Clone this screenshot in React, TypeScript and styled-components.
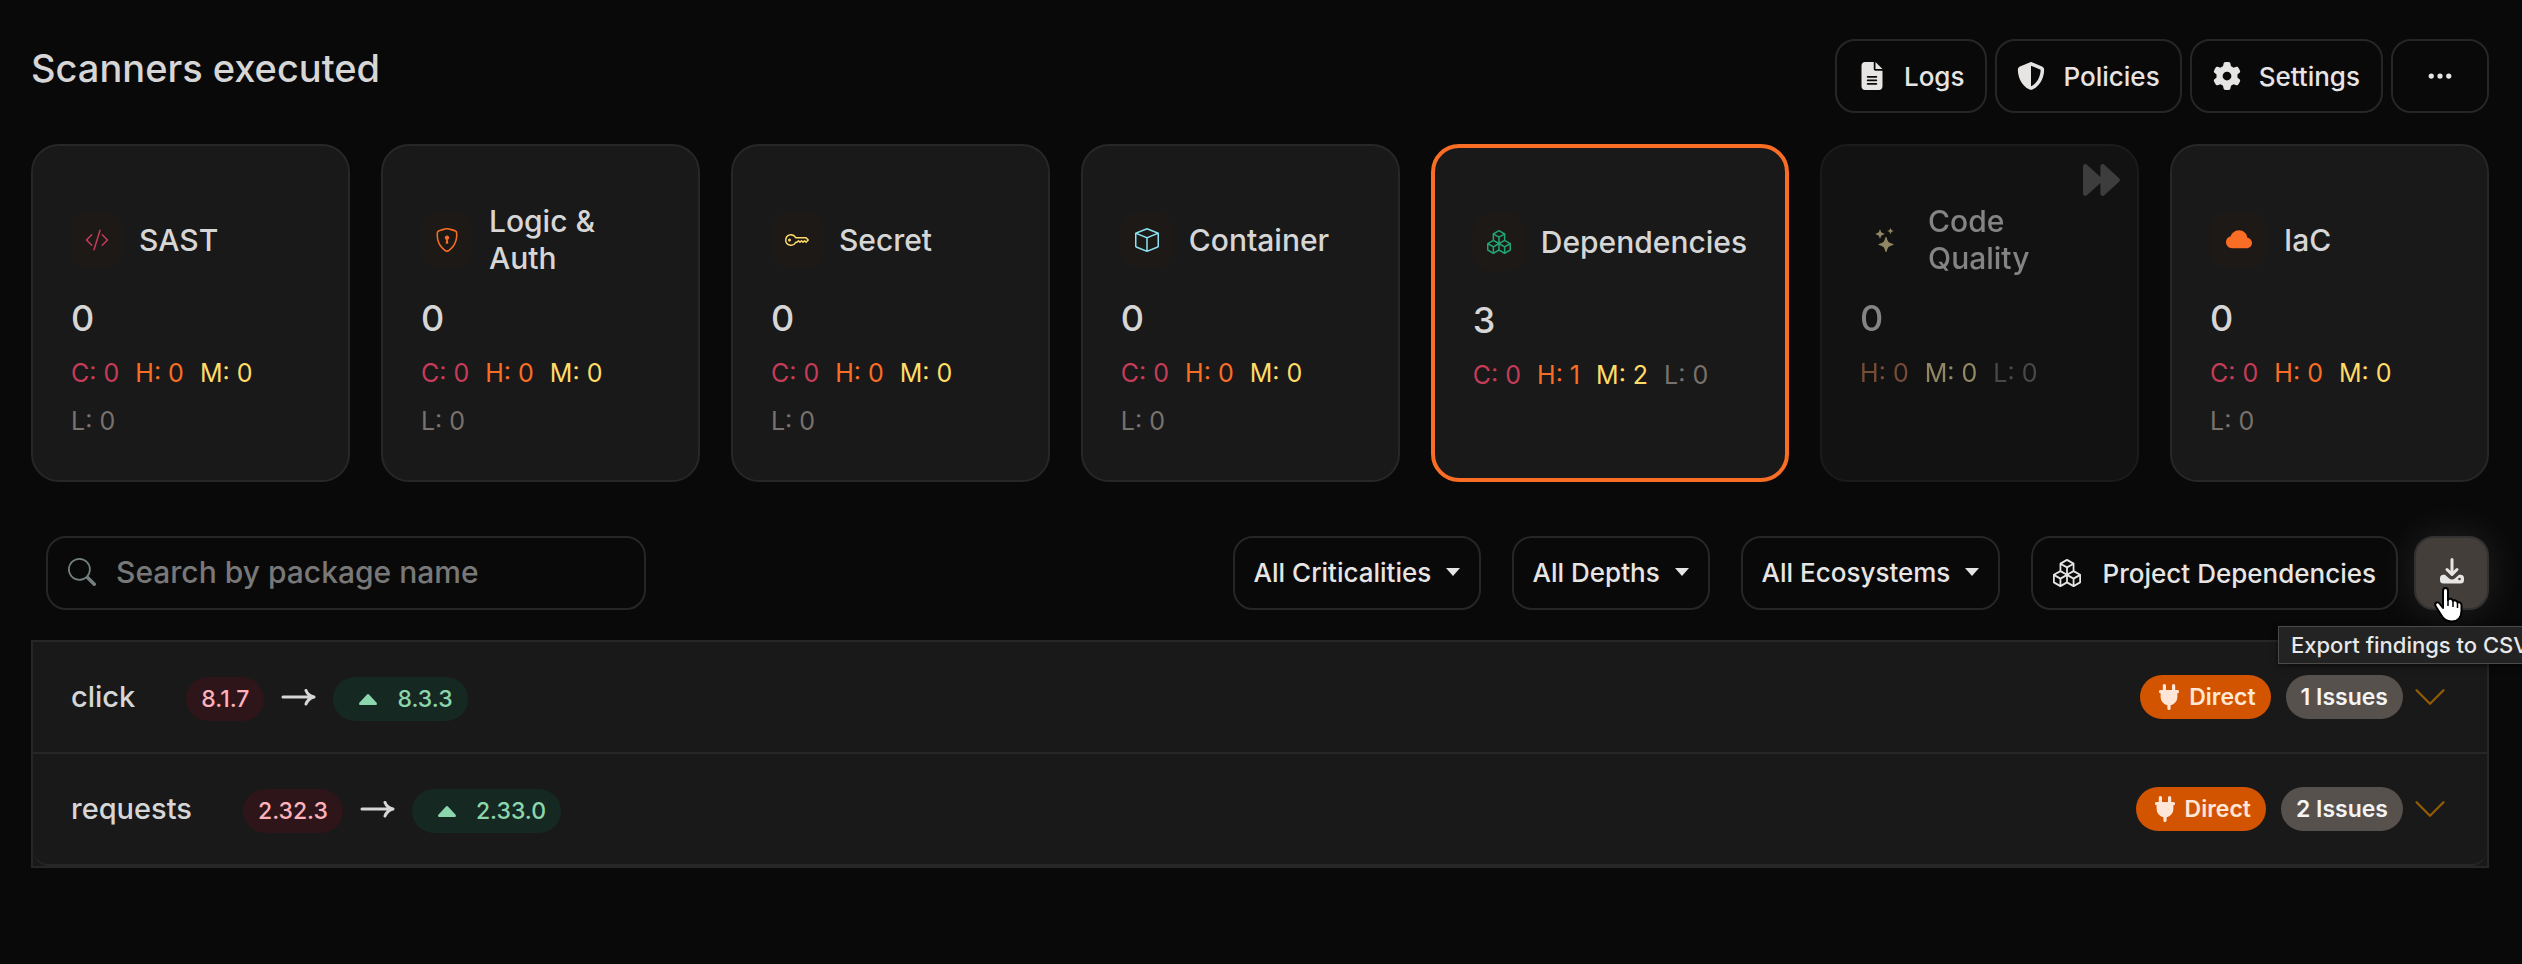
import React from "react";
import styled, { createGlobalStyle, css } from "styled-components";
import {
  BsCodeSlash, BsShieldLock, BsKey, BsBox, BsBoxes, BsStars, BsCloudFill,
  BsSearch, BsThreeDots, BsChevronDown,
} from "react-icons/bs";
import { FaFileLines, FaShieldHalved, FaGear } from "react-icons/fa6";

const Global = createGlobalStyle`
  * { box-sizing: border-box; }
  html, body { margin: 0; background: #090909; }
  html { min-height: 100%; }
  body {
    font-family: Inter, "Liberation Sans", sans-serif;
    color: #d6d6d6;
    overflow-x: hidden;
  }
  h1, h2, p, ul { margin: 0; padding: 0; }
  button, input, select { font: inherit; color: inherit; margin: 0; }
  svg { display: block; flex: none; }
`;

const Page = styled.main`
  padding: 39px 33px 48px 31px;
`;

const Header = styled.header`
  display: flex;
  justify-content: space-between;
  align-items: flex-start;
  margin-bottom: 31px;
`;

const Title = styled.h1`
  font-size: 38px;
  line-height: 58px;
  font-weight: 500;
`;

const Actions = styled.div`
  display: flex;
  gap: 8px;
`;

const outlined = css`
  height: 74px;
  border: 2px solid #262626;
  border-radius: 20px;
  background: #090909;
  color: #e7e5e4;
  font-size: 26px;
  font-weight: 500;
`;

const OutlineButton = styled.button<{ $gap?: number; $pad?: number }>`
  ${outlined}
  display: flex;
  align-items: center;
  justify-content: center;
  gap: ${(p) => p.$gap ?? 18}px;
  padding: 0 ${(p) => p.$pad ?? 20}px;
  cursor: pointer;
`;

const Cards = styled.section`
  display: flex;
  gap: 31px;
`;

const Card = styled.article<{ $active?: boolean; $muted?: boolean }>`
  position: relative;
  flex: 1 1 0;
  min-height: 338px;
  padding: 57px 38px 32px;
  border: ${(p) => (p.$active ? "4px solid #f96d25" : "2px solid #272727")};
  border-radius: 28px;
  background: #191919;
  ${(p) => p.$muted && "opacity: 0.6; filter: grayscale(0.5);"}
`;

const CardHead = styled.div`
  display: flex;
  align-items: center;
  gap: 16px;
  height: 74px;
`;

const IconTile = styled.span<{ $color: string; $wide?: boolean }>`
  display: flex;
  flex: none;
  align-items: center;
  justify-content: center;
  width: ${(p) => (p.$wide ? 58 : 52)}px;
  height: 58px;
  border-radius: 18px;
  background: #1d1917;
  color: ${(p) => p.$color};
  font-size: ${(p) => (p.$wide ? 26 : 24)}px;
`;

const CardName = styled.h2`
  font-size: 30px;
  line-height: 37px;
  font-weight: 500;
`;

const Count = styled.p`
  margin-top: 19px;
  font-size: 36px;
  line-height: 44px;
  font-weight: 500;
`;

const Levels = styled.ul`
  display: flex;
  flex-wrap: wrap;
  column-gap: 16px;
  margin-top: 9px;
  list-style: none;
  font-size: 25px;
  line-height: 48px;
`;

const levelColors = { C: "#c43c58", H: "#f96d25", M: "#ffdb67", L: "#78716c" };
type Level = keyof typeof levelColors;

const LevelItem = styled.li<{ $level: Level }>`
  color: ${(p) => levelColors[p.$level]};
`;

const Skipped = styled.span`
  position: absolute;
  top: 18px;
  right: 17px;
  color: #606060;
`;

const Toolbar = styled.section`
  display: flex;
  align-items: center;
  justify-content: space-between;
  margin: 54px 0 30px;
  padding-left: 15px;
`;

const SearchBox = styled.label`
  ${outlined}
  display: flex;
  align-items: center;
  gap: 20px;
  width: 600px;
  padding: 0 20px 2px;
  color: #748080;
  font-size: 30px;
  font-weight: 500;
`;

const SearchInput = styled.input`
  flex: 1;
  min-width: 0;
  padding: 0;
  border: 0;
  outline: 0;
  background: transparent;
  &::placeholder { color: #787878; opacity: 1; }
`;

const Filters = styled.div`
  display: flex;
  gap: 31px;
`;

const Filter = styled.label`
  ${outlined}
  display: flex;
  align-items: center;
  gap: 14px;
  padding: 0 19px 2px;
`;

const Select = styled.select`
  appearance: none;
  padding: 0;
  border: 0;
  outline: 0;
  background: transparent;
`;

const Exports = styled.div`
  display: flex;
  gap: 16px;
`;

const ExportWrap = styled.div`
  position: relative;
`;

const ExportButton = styled.button`
  ${outlined}
  display: flex;
  align-items: center;
  justify-content: center;
  width: 75px;
  padding: 0 0 4px;
  border-color: #333131;
  background: #443e3b;
  box-shadow: 0 0 40px rgba(231, 229, 228, 0.12);
  cursor: pointer;
`;

const Pointer = styled.svg`
  position: absolute;
  top: 50px;
  left: 19px;
  z-index: 3;
`;

const Tooltip = styled.div`
  position: absolute;
  top: 90px;
  left: -136px;
  z-index: 2;
  padding: 0 12px;
  border: 1px solid #4a4a4a;
  background: #232323;
  color: #e8e8e8;
  font-size: 22px;
  line-height: 36px;
  font-weight: 500;
  white-space: nowrap;
  box-shadow: 0 2px 6px rgba(0, 0, 0, 0.5);
`;

const Packages = styled.ul`
  list-style: none;
  border: 2px solid #262626;
  background: #191919;
`;

const PackageRow = styled.li`
  display: flex;
  align-items: center;
  height: 112px;
  padding: 0 39px 0 38px;
  border-bottom: 2px solid #262626;
  &:last-child { border-radius: 0 0 16px 16px; }
`;

const PackageName = styled.span`
  margin-right: 51px;
  font-size: 29px;
  line-height: 36px;
  font-weight: 500;
`;

const Pill = styled.span<{ $bg: string; $fg: string; $bold?: boolean; $gap?: number; $indent?: number }>`
  display: flex;
  align-items: center;
  gap: ${(p) => p.$gap ?? 0}px;
  height: 44px;
  padding: 0 15px 0 ${(p) => p.$indent ?? 15}px;
  border-radius: 22px;
  background: ${(p) => p.$bg};
  color: ${(p) => p.$fg};
  font-size: 23px;
  font-weight: ${(p) => (p.$bold ? 600 : 500)};
`;

const Versions = styled.div`
  display: flex;
  align-items: center;
  gap: 17px;
  padding-top: 4px;
`;

const RowEnd = styled.div`
  display: flex;
  align-items: center;
  gap: 15px;
  margin-left: auto;
`;

const Expand = styled.button`
  display: flex;
  margin-left: -6px;
  padding: 0;
  border: 0;
  background: none;
  color: #945c07;
  cursor: pointer;
`;

const Caret = () => (
  <svg width="14" height="8" viewBox="0 0 14 8" aria-hidden="true">
    <path d="M0 0h14L7 8z" fill="currentColor" />
  </svg>
);

const FastForward = () => (
  <svg width="37" height="32" viewBox="0 0 37 32" fill="currentColor" aria-hidden="true">
    <path d="M0 2.6C0 .3 2.600-.7 4.200.9L17.400 13V2.600C17.400.3 20-.7 21.600.9l14.200 13.100a2.700 2.700 0 0 1 0 4L21.600 31.100c-1.600 1.600-4.200.6-4.200-1.700V19L4.200 31.100C2.600 32.700 0 31.700 0 29.400z" />
  </svg>
);

const Download = () => (
  <svg width="24" height="26" viewBox="0 0 24 26" fill="none" stroke="currentColor" aria-hidden="true">
    <path d="M3.500 16.800h1.500l3.600 3.200a5 5 0 0 0 6.800 0l3.600-3.200h1.500a3.500 3.500 0 0 1 3.500 3.500v1.700a3.500 3.500 0 0 1-3.500 3.500h-17A3.500 3.500 0 0 1 0 22v-1.700a3.500 3.500 0 0 1 3.500-3.500z" fill="currentColor" stroke="none" />
    <path d="M12 1.500V16M7 11.500l5 5 5-5" strokeWidth="3" strokeLinecap="round" strokeLinejoin="round" />
    <circle cx="19.500" cy="21" r="1.300" fill="#443e3b" stroke="none" />
  </svg>
);

const Plug = () => (
  <svg width="20" height="26" viewBox="0 0 20 26" fill="currentColor" aria-hidden="true">
    <path d="M5.500 0A1.600 1.600 0 0 1 7 1.600V6h6V1.600a1.600 1.600 0 0 1 3.200 0V6h2.200a1.600 1.600 0 0 1 0 3.300V13a8.400 8.400 0 0 1-6.800 8.200v3.200a1.600 1.600 0 0 1-3.200 0v-3.200A8.400 8.400 0 0 1 1.600 13V9.300a1.600 1.600 0 0 1 0-3.300h2.200V1.600A1.600 1.600 0 0 1 5.500 0z" />
  </svg>
);

const Arrow = () => (
  <svg width="35" height="20" viewBox="0 0 35 20" fill="none" stroke="#d6d6d6" strokeWidth="3" strokeLinecap="round" strokeLinejoin="round" role="img" aria-label="upgrade to">
    <path d="M2 8h31M25 1.500c1.500 4 4 5.500 8 6.500-4 1-6.500 3-8 7" />
  </svg>
);

const UpTriangle = () => (
  <svg width="18" height="11" viewBox="0 0 18 11" aria-hidden="true">
    <path d="M8 .6a1.400 1.400 0 0 1 2 0l7.600 8.200c.7.800.2 2.200-1 2.200H1.400c-1.200 0-1.700-1.400-1-2.200z" fill="currentColor" />
  </svg>
);

const scanners: {
  name: string; icon: React.ReactNode; color: string; count: number;
  levels: [Level, number][]; active?: boolean; muted?: boolean; wide?: boolean;
}[] = [
  { name: "SAST", icon: <BsCodeSlash />, color: "#c43c58", count: 0, levels: [["C", 0], ["H", 0], ["M", 0], ["L", 0]] },
  { name: "Logic & Auth", icon: <BsShieldLock />, color: "#f96d25", count: 0, levels: [["C", 0], ["H", 0], ["M", 0], ["L", 0]] },
  { name: "Secret", icon: <BsKey />, color: "#ffdb67", count: 0, levels: [["C", 0], ["H", 0], ["M", 0], ["L", 0]] },
  { name: "Container", icon: <BsBox />, color: "#8ae3f0", count: 0, levels: [["C", 0], ["H", 0], ["M", 0], ["L", 0]] },
  { name: "Dependencies", icon: <BsBoxes />, color: "#21a577", count: 3, levels: [["C", 0], ["H", 1], ["M", 2], ["L", 0]], active: true },
  { name: "Code Quality", icon: <BsStars />, color: "#ffdb67", count: 0, levels: [["H", 0], ["M", 0], ["L", 0]], muted: true },
  { name: "IaC", icon: <BsCloudFill />, color: "#f96d25", count: 0, levels: [["C", 0], ["H", 0], ["M", 0], ["L", 0]], wide: true },
];

const packages = [
  { name: "click", from: "8.1.7", to: "8.3.3", issues: 1 },
  { name: "requests", from: "2.32.3", to: "2.33.0", issues: 2 },
];

export default function App() {
  return (
    <Page>
      <Global />
      <Header>
        <Title>Scanners executed</Title>
        <Actions>
          <OutlineButton $pad={21}><FaFileLines size={28} />Logs</OutlineButton>
          <OutlineButton $pad={20}><FaShieldHalved size={28} />Policies</OutlineButton>
          <OutlineButton $pad={21}><FaGear size={28} />Settings</OutlineButton>
          <OutlineButton $pad={33} aria-label="More"><BsThreeDots size={28} /></OutlineButton>
        </Actions>
      </Header>
      <Cards>
        {scanners.map((s) => (
          <Card key={s.name} $active={s.active} $muted={s.muted}>
            {s.muted && <Skipped><FastForward /></Skipped>}
            <CardHead>
              <IconTile $color={s.color} $wide={s.wide}>{s.icon}</IconTile>
              <CardName>{s.name}</CardName>
            </CardHead>
            <Count>{s.count}</Count>
            <Levels>
              {s.levels.map(([level, n]) => (
                <LevelItem key={level} $level={level}>{level}: {n}</LevelItem>
              ))}
            </Levels>
          </Card>
        ))}
      </Cards>
      <Toolbar>
        <SearchBox>
          <BsSearch size={28} />
          <SearchInput type="search" placeholder="Search by package name" aria-label="Search by package name" />
        </SearchBox>
        <Filters>
          {["Criticalities", "Depths", "Ecosystems"].map((f) => (
            <Filter key={f}>
              <Select aria-label={f}><option>All {f}</option></Select>
              <Caret />
            </Filter>
          ))}
          <Exports>
            <OutlineButton $gap={22}><BsBoxes size={28} />Project Dependencies</OutlineButton>
            <ExportWrap>
              <ExportButton aria-label="Export findings to CSV"><Download /></ExportButton>
              <Pointer width="32" height="38" viewBox="0 0 32 38" aria-hidden="true">
                <path d="M10 5c0-4 5-4 5 0v9c1-2 4.500-1.500 5 1 1.500-1.500 4-.5 4.500 1.500 2-1 4 .5 4 3v5c0 7-4 11-10 11-5 0-8-2-10-6L2.500 20c-1.200-3 2-5 4-2.500L10 22z" fill="#fff" stroke="#000" strokeWidth="2" strokeLinejoin="round" />
                <path d="M15 13v7M20 15v6M24.500 17v5" stroke="#000" strokeWidth="1.500" fill="none" />
              </Pointer>
              <Tooltip role="tooltip">Export findings to CSV</Tooltip>
            </ExportWrap>
          </Exports>
        </Filters>
      </Toolbar>
      <Packages>
        {packages.map((p) => (
          <PackageRow key={p.name}>
            <PackageName>{p.name}</PackageName>
            <Versions>
              <Pill $bg="#2e151a" $fg="#fcb1bb">{p.from}</Pill>
              <Arrow />
              <Pill $bg="#162822" $fg="#8cd6ae" $gap={20} $indent={26}><UpTriangle />{p.to}</Pill>
            </Versions>
            <RowEnd>
              <Pill $bg="#d35400" $fg="#ffe6d6" $bold $gap={10} $indent={19}><Plug />Direct</Pill>
              <Pill $bg="#57514d" $fg="#f5f5f4" $bold>{p.issues} Issues</Pill>
              <Expand aria-label={`Show issues of ${p.name}`}><BsChevronDown size={36} /></Expand>
            </RowEnd>
          </PackageRow>
        ))}
      </Packages>
    </Page>
  );
}
